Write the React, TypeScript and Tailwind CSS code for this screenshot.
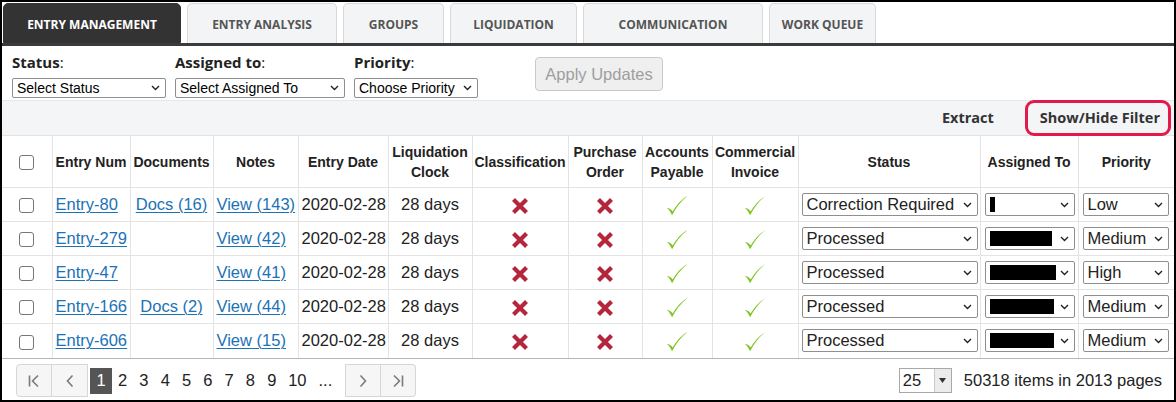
import React from "react";

const tabs = [
  { label: "ENTRY MANAGEMENT", w: "w-[178px]" },
  { label: "ENTRY ANALYSIS", w: "w-[150px]" },
  { label: "GROUPS", w: "w-[101px]" },
  { label: "LIQUIDATION", w: "w-[127px]" },
  { label: "COMMUNICATION", w: "w-[180px]" },
  { label: "WORK QUEUE", w: "w-[107px]" },
];

const rows = [
  { id: "Entry-80", docs: "Docs (16)", notes: "View (143)", status: "Correction Required", redact: "w-[5px]", priority: "Low" },
  { id: "Entry-279", docs: "", notes: "View (42)", status: "Processed", redact: "w-[62px]", priority: "Medium" },
  { id: "Entry-47", docs: "", notes: "View (41)", status: "Processed", redact: "w-[66px]", priority: "High" },
  { id: "Entry-166", docs: "Docs (2)", notes: "View (44)", status: "Processed", redact: "w-[64px]", priority: "Medium" },
  { id: "Entry-606", docs: "", notes: "View (15)", status: "Processed", redact: "w-[64px]", priority: "Medium" },
];

const Chevron = () => (
  <svg width="9" height="6" viewBox="0 0 9 6" className="shrink-0">
    <path d="M1 1l3.5 3.5L8 1" fill="none" stroke="#222" strokeWidth="1.4" />
  </svg>
);

const Cross = () => (
  <svg width="18" height="18" viewBox="0 0 18 18" className="inline-block align-middle">
    <path d="M2.5 2.5l13 13M15.5 2.5l-13 13" stroke="#b5253c" strokeWidth="4.2" strokeLinecap="butt" />
  </svg>
);

const Check = () => (
  <svg width="24" height="22" viewBox="0 0 22 20" className="inline-block align-middle">
    <path d="M1.5 11.5c2 1.5 3.5 3.5 5 7 3.5-7 8-13 14-17.5-6 3-10 8.5-13.5 14-1.5-2-3-3.2-5.5-3.5z" fill="#7cc41c" />
  </svg>
);

const Box = () => (
  <span className="inline-block h-[15px] w-[15px] rounded-[3px] border border-[#767676] bg-white align-middle" />
);

function Dropdown({ text, className, children }: { text?: string; className: string; children?: React.ReactNode }) {
  return (
    <div className={`flex items-center justify-between rounded-[2px] border border-[#8f8f8f] bg-white pl-[4px] pr-[5px] ${className}`}>
      {children ?? <span className="truncate">{text}</span>}
      <Chevron />
    </div>
  );
}

const th = "border-r border-[#e3e3e3] px-[2px] text-center font-bold text-[14px] leading-[20px] text-[#222]";
const td = "border-r border-t border-[#e3e3e3] px-[3px] h-[34px] whitespace-nowrap text-[16.5px] text-[#222]";
const link = "text-[#1b72b5] underline decoration-1 underline-offset-2";

export default function App() {
  return (
    <div className="h-[402px] w-[1176px] overflow-hidden border-2 border-black bg-white font-['Liberation_Sans',Arial,sans-serif]">
      {/* tabs */}
      <div className="flex gap-[6px] pl-[1px] pt-[1px]">
        {tabs.map((t, i) => (
          <div
            key={t.label}
            className={`flex h-[40px] items-center justify-center rounded-t-[5px] border pt-[3px] font-['Open_Sans',sans-serif] text-[12px] font-bold ${t.w} ${
              i === 0 ? "border-[#333] bg-[#333333] text-white" : "border-b-0 border-[#d9d9d9] bg-[#f3f4f6] text-[#555]"
            }`}
          >
            {t.label}
          </div>
        ))}
      </div>
      <div className="h-[3px] bg-[#3b3b3b]" />

      {/* filters */}
      <div className="flex h-[54px] items-start pl-[10px] pt-[6px]">
        <div className="w-[163px]">
          <div className="font-['Open_Sans',sans-serif] text-[15px] leading-[20px] text-[#222]"><b>Status</b>:</div>
          <Dropdown text="Select Status" className="mt-[6px] h-[20px] w-[154px] text-[14px]" />
        </div>
        <div className="w-[179px]">
          <div className="font-['Open_Sans',sans-serif] text-[15px] leading-[20px] text-[#222]"><b>Assigned to</b>:</div>
          <Dropdown text="Select Assigned To" className="mt-[6px] h-[20px] w-[170px] text-[14px]" />
        </div>
        <div className="w-[181px]">
          <div className="font-['Open_Sans',sans-serif] text-[15px] leading-[20px] text-[#222]"><b>Priority</b>:</div>
          <Dropdown text="Choose Priority" className="mt-[6px] h-[20px] w-[124px] text-[14px]" />
        </div>
        <button className="mt-[5px] flex h-[34px] w-[128px] items-center justify-center rounded-[4px] border border-[#c9c9c9] bg-[#efefef] text-[16.5px] text-[#9e9e9e]">
          Apply Updates
        </button>
      </div>

      {/* toolbar */}
      <div className="flex h-[35px] items-center justify-end border-t border-[#e8e8e8] bg-[#f4f5f7] pr-[3px] font-['Open_Sans',sans-serif] text-[14.5px] font-bold text-[#333]">
        <span className="mr-[31px]">Extract</span>
        <span className="flex h-[36px] items-center rounded-[9px] border-[3px] border-[#e3194b] pl-[12px] pr-[8px]">Show/Hide Filter</span>
      </div>

      {/* grid */}
      <table className="w-[1172px] table-fixed border-collapse">
        <colgroup>
          {[50, 78, 83, 85, 90, 84, 96, 74, 70, 86, 182, 98, 96].map((w, i) => (
            <col key={i} style={{ width: w }} />
          ))}
        </colgroup>
        <thead>
          <tr className="h-[52px] border-t border-[#e3e3e3]">
            <th className={th}><Box /></th>
            <th className={th}>Entry Num</th>
            <th className={th}>Documents</th>
            <th className={th}>Notes</th>
            <th className={th}>Entry Date</th>
            <th className={th}>Liquidation Clock</th>
            <th className={`${th} text-[13.5px]`}>Classification</th>
            <th className={th}>Purchase Order</th>
            <th className={th}>Accounts Payable</th>
            <th className={th}>Commercial Invoice</th>
            <th className={th}>Status</th>
            <th className={th}>Assigned To</th>
            <th className={`${th} border-r-0`}>Priority</th>
          </tr>
        </thead>
        <tbody>
          {rows.map((r) => (
            <tr key={r.id}>
              <td className={`${td} text-center`}><Box /></td>
              <td className={td}><span className={link}>{r.id}</span></td>
              <td className={`${td} text-center`}>{r.docs && <span className={link}>{r.docs}</span>}</td>
              <td className={td}><span className={link}>{r.notes}</span></td>
              <td className={`${td} px-[2px]`}>2020-02-28</td>
              <td className={`${td} text-center`}>28 days</td>
              <td className={`${td} text-center`}><Cross /></td>
              <td className={`${td} text-center`}><Cross /></td>
              <td className={`${td} text-center`}><Check /></td>
              <td className={`${td} text-center`}><Check /></td>
              <td className={td}>
                <Dropdown text={r.status} className="h-[23px] w-[176px]" />
              </td>
              <td className={`${td} pl-[4px]`}>
                <Dropdown className="h-[23px] w-[90px] pl-[4px]">
                  <span className={`h-[15px] bg-black ${r.redact}`} />
                </Dropdown>
              </td>
              <td className={`${td} border-r-0 pl-[4px]`}>
                <Dropdown text={r.priority} className="h-[23px] w-[86px]" />
              </td>
            </tr>
          ))}
        </tbody>
      </table>

      {/* pager */}
      <div className="flex h-[43px] items-center border-t border-[#b5b5b5] pl-[14px] pr-[12px] pt-[2px]">
        <div className="flex h-[33px]">
          <div className="flex w-[36px] items-center justify-center rounded-l-[4px] border border-[#d6d6d6] bg-[#f6f6f6]">
            <svg width="14" height="14" viewBox="0 0 14 14">
              <path d="M2.5 1.5v11M11 1.5L5.5 7l5.5 5.5" fill="none" stroke="#7a7a7a" strokeWidth="1.6" />
            </svg>
          </div>
          <div className="flex w-[36px] items-center justify-center border border-l-0 border-[#d6d6d6] bg-[#f6f6f6]">
            <svg width="10" height="14" viewBox="0 0 10 14">
              <path d="M7.5 1.5L2.5 7l5 5.5" fill="none" stroke="#7a7a7a" strokeWidth="1.6" />
            </svg>
          </div>
        </div>
        <div className="ml-[2px] flex items-center text-[16.5px] text-[#222]">
          <span className="flex h-[26px] w-[22px] items-center justify-center bg-[#555555] text-white">1</span>
          {["2", "3", "4", "5", "6", "7", "8", "9"].map((n) => (
            <span key={n} className="w-[21.3px] text-center">{n}</span>
          ))}
          <span className="w-[30px] text-center">10</span>
          <span className="w-[26px] text-center">...</span>
        </div>
        <div className="ml-[7px] flex h-[33px]">
          <div className="flex w-[36px] items-center justify-center border border-[#d6d6d6] bg-[#f6f6f6]">
            <svg width="10" height="14" viewBox="0 0 10 14">
              <path d="M2.5 1.5l5 5.5-5 5.5" fill="none" stroke="#7a7a7a" strokeWidth="1.6" />
            </svg>
          </div>
          <div className="flex w-[35px] items-center justify-center rounded-r-[4px] border border-l-0 border-[#d6d6d6] bg-[#f6f6f6]">
            <svg width="14" height="14" viewBox="0 0 14 14">
              <path d="M3 1.5L8.5 7 3 12.5M11.5 1.5v11" fill="none" stroke="#7a7a7a" strokeWidth="1.6" />
            </svg>
          </div>
        </div>
        <div className="ml-auto flex items-center">
          <div className="flex h-[25px] border border-[#a9a9a9]">
            <span className="flex w-[34px] items-center pl-[3px] text-[16.5px] text-[#222]">25</span>
            <span className="flex w-[17px] items-center justify-center border-l border-[#c8c8c8] bg-[#ececec]">
              <svg width="7" height="5" viewBox="0 0 7 5"><path d="M0 0h7L3.5 5z" fill="#333" /></svg>
            </span>
          </div>
          <span className="ml-[12px] text-[16.5px] text-[#222]">50318 items in 2013 pages</span>
        </div>
      </div>
    </div>
  );
}
